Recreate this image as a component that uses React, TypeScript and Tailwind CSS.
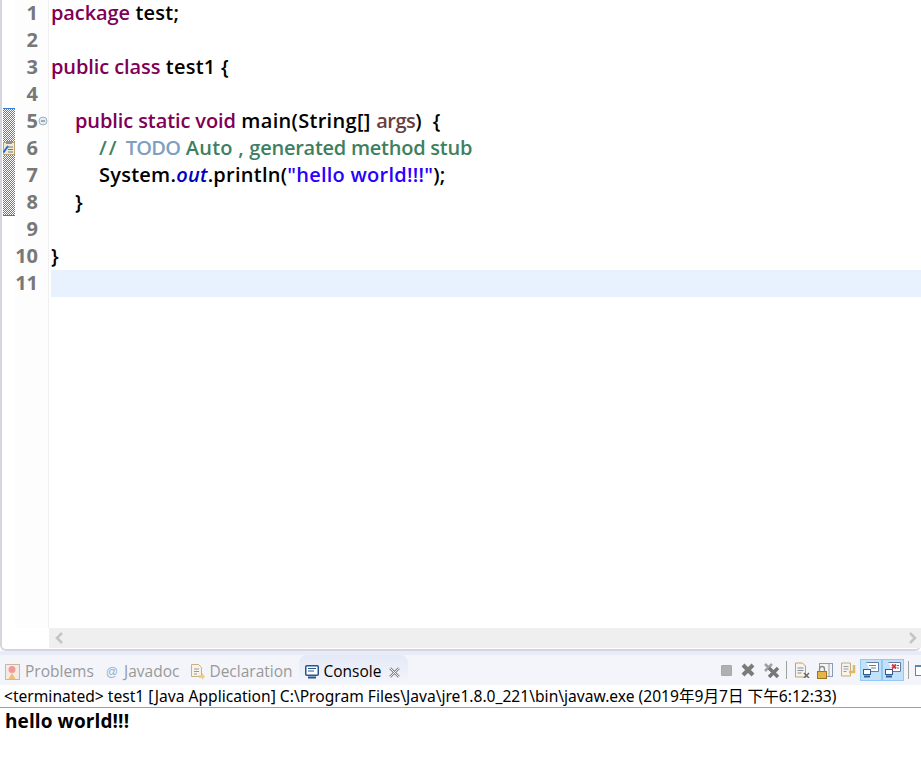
const LINES = [
  [{ t: 'package', k: 1 }, { t: ' test;' }],
  [],
  [{ t: 'public class', k: 1 }, { t: ' test1 {' }],
  [],
  [{ t: '', k: 7 }, { t: 'public static void', k: 1 }, { t: ' main(String[] ', k: 11 }, { t: 'args', k: 2 }, { t: ') {', k: 12 }],
  [{ t: '', k: 8 }, { t: '// ', k: 9 }, { t: 'TODO', k: 4 }, { t: ' Auto ', k: 3 }, { t: ', ', k: 3 }, { t: 'generated method stub', k: 10 }],
  [{ t: '', k: 8 }, { t: 'System.' }, { t: 'out', k: 5 }, { t: '.println(' }, { t: '"hello world!!!"', k: 6 }, { t: ');' }],
  [{ t: '', k: 7 }, { t: '}' }],
  [],
  [{ t: '}' }],
  [],
]

const TOKEN: Record<number, string> = {
  1: 'text-[#7f0055] tracking-[-0.1px]',
  2: 'text-[#6a3e3e] tracking-[-0.5px]',
  3: 'text-[#3f7f5f]',
  4: 'text-[#7f9fbf] tracking-[-0.75px]',
  5: 'text-[#0000c0] italic',
  6: 'text-[#2a00ff]',
  7: 'inline-block w-[24px]',
  8: 'inline-block w-[48px]',
  9: 'text-[#3f7f5f] tracking-[2px]',
  10: 'text-[#3f7f5f] tracking-[-0.25px]',
  11: 'tracking-[0.3px]',
  12: 'tracking-[3px]',
}

function ToolBtn({ children, on, narrow }: { children: React.ReactNode; on?: boolean; narrow?: boolean }) {
  return (
    <span className={`flex h-[22px] items-center justify-center ${on ? 'w-[22px] border border-[#90c8f6] bg-[#c4e1fa]' : narrow ? 'w-[22px]' : 'w-[23px]'}`}>
      {children}
    </span>
  )
}

function Sep() {
  return <span className="mx-[3.5px] h-[18px] w-px bg-[#a0a0a0]" />
}

export default function App() {
  return (
    <div className="flex h-[778px] w-[921px] flex-col overflow-hidden bg-white font-['Open_Sans',sans-serif]">
      {/* editor */}
      <div className="flex h-[651px] flex-col rounded-b-md border-b-2 border-l-2 border-[#d3d6dc]">
        <div className="flex h-[628px]">
          <div className="w-[13px] pl-[1px] pt-[108px]">
            <div className="relative h-[108px] w-[12px] border-y border-[#2f7fd9] bg-[repeating-conic-gradient(#3a86dc_0_25%,#ffffff_0_50%)] bg-[length:2px_2px]">
              <svg className="absolute left-0 top-[32px]" width="12" height="14" viewBox="0 0 12 14">
                <rect x="0.5" y="1.5" width="11" height="12" fill="#f3ead2" stroke="#b9a272" />
                <rect x="3" y="0" width="6" height="3" fill="#8a8f99" />
                <path d="M5 6h5M5 8.500h5M5 11h5" stroke="#6b7a90" />
                <path d="M0.500 11.500 5 5" stroke="#1f6fe0" strokeWidth="2" />
              </svg>
            </div>
          </div>
          <div className="w-[34px] border-r border-[#f0f0f0] bg-[#fdfdfd] text-right text-[20px] font-bold leading-[25px] text-[#787878]">
            {LINES.map((_, i) => (
              <div key={i} className="relative h-[27px] pr-[10px]">
                {i + 1}
                {i === 4 && (
                  <svg className="absolute right-0 top-[8px]" width="10" height="10" viewBox="0 0 10 10">
                    <circle cx="5" cy="5" r="4" fill="#e6edf3" stroke="#9fb0bf" />
                    <path d="M3 5h4" stroke="#56697c" />
                  </svg>
                )}
              </div>
            ))}
          </div>
          <div className="flex-1 whitespace-pre text-[20px] font-semibold leading-[25px] tracking-[0.25px] text-black">
            {LINES.map((line, i) => (
              <div key={i} className={`ml-[2px] h-[27px] ${i === 10 ? 'bg-[#e8f2fe]' : ''}`}>
                {line.map((s, j) => (
                  <span key={j} className={s.k ? TOKEN[s.k] : ''}>
                    {s.t}
                  </span>
                ))}
              </div>
            ))}
          </div>
        </div>
        <div className="ml-[47px] flex h-[20px] items-center justify-between bg-[#efefef] pl-[5px] pr-[3px]">
          <svg width="10" height="12" viewBox="0 0 10 12" fill="none" stroke="#c4c4c4" strokeWidth="2.500">
            <path d="M8 1 3 6l5 5" />
          </svg>
          <svg width="10" height="12" viewBox="0 0 10 12" fill="none" stroke="#c4c4c4" strokeWidth="2.500">
            <path d="M2 1l5 5-5 5" />
          </svg>
        </div>
      </div>

      {/* console view */}
      <div className="h-[4px] bg-[#e7ecf8]" />
      <div className="flex h-[30px] items-stretch bg-[#f3f5fb] pl-[5px] text-[15.500px] text-[#999999]">
        <div className="flex items-center gap-[5px] pr-[12px] pt-[4px]">
          <svg width="15" height="16" viewBox="0 0 15 16">
            <rect x="0.500" y="0.500" width="14" height="15" fill="#f4ece4" stroke="#c9b8a8" />
            <circle cx="7" cy="5.500" r="3.500" fill="#ee9a9a" />
            <path d="M7 9l3.500 6h-7z" fill="#eec070" />
          </svg>
          Problems
        </div>
        <div className="flex items-center gap-[6px] pr-[11px] pt-[4px] font-['Liberation_Sans',sans-serif]">
          <span className="text-[12px] text-[#8fb0d0]">@</span>
          <span className="font-['Open_Sans',sans-serif]">Javadoc</span>
        </div>
        <div className="flex items-center gap-[4px] pr-[6px] pt-[4px]">
          <svg width="15" height="18" viewBox="0 0 15 18" fill="none">
            <path d="M1.500 1.500h7l3 3v9h-10z" fill="#f8f3e6" stroke="#c8b080" />
            <path d="M4 6h5M4 8.500h5M4 11h3" stroke="#8a9bb0" />
            <path d="M9 12h3v-2l3 3.500-3 3.500v-2H9z" fill="#eccf90" />
          </svg>
          Declaration
        </div>
        <div className="flex w-[109px] items-center rounded-t-lg bg-gradient-to-b from-[#e3e9f6] to-[#f4f6fb] pl-[6px] pt-[4px] text-black">
          <svg width="14" height="14" viewBox="0 0 14 14" className="mr-[5px]">
            <rect x="0.750" y="0.750" width="12.500" height="9.500" rx="1" fill="#ffffff" stroke="#27558f" strokeWidth="1.500" />
            <path d="M3 3.500h8M3 6h6" stroke="#27558f" />
            <path d="M3 12.500h8" stroke="#27558f" strokeWidth="2" />
          </svg>
          Console
          <svg width="11" height="11" viewBox="0 0 10 10" className="ml-[8px]" fill="none">
            <path d="M1 1l8 8M9 1 1 9" stroke="#8a8a8a" strokeWidth="2.500" />
            <path d="M1 1l8 8M9 1 1 9" stroke="#ffffff" strokeWidth="0.800" />
          </svg>
        </div>
        <div className="ml-auto flex items-center">
          <ToolBtn narrow>
            <span className="h-[11px] w-[11px] rounded-[1px] border border-[#a8a8a8] bg-[#b0b0b0]" />
          </ToolBtn>
          <ToolBtn narrow>
            <svg width="14" height="14" viewBox="0 0 14 14">
              <path d="M2 2l10 10M12 2 2 12" stroke="#7b7b7b" strokeWidth="4" />
            </svg>
          </ToolBtn>
          <ToolBtn>
            <svg width="16" height="16" viewBox="0 0 16 16" fill="none">
              <path d="M2 2l7 7M9 2 2 9" stroke="#a0a0a0" strokeWidth="2.500" />
              <path d="M6 6l9 9M15 6l-9 9" stroke="#777777" strokeWidth="3.500" />
            </svg>
          </ToolBtn>
          <Sep />
          <ToolBtn>
            <svg width="16" height="16" viewBox="0 0 16 16" fill="none">
              <path d="M1.500 1h7l3 3v11h-10z" fill="#f8f3e6" stroke="#b8a478" />
              <path d="M3.500 6h6M3.500 8.500h6M3.500 11h4" stroke="#7f8fa5" />
              <path d="M10 11l5 5M15 11l-5 5" stroke="#666666" strokeWidth="1.500" />
            </svg>
          </ToolBtn>
          <ToolBtn>
            <svg width="16" height="17" viewBox="0 0 16 17" fill="none">
              <rect x="2.500" y="1.500" width="13" height="13" fill="#f4f4f0" stroke="#8d9cb0" />
              <path d="M12 2v12" stroke="#8d9cb0" />
              <rect x="0.500" y="9.500" width="9" height="7" fill="#e5b54a" stroke="#9c7420" />
              <path d="M2.500 9.500V7a2.500 2.500 0 0 1 5 0v2.500" stroke="#8a8a8a" strokeWidth="1.300" />
            </svg>
          </ToolBtn>
          <ToolBtn>
            <svg width="16" height="16" viewBox="0 0 16 16" fill="none">
              <path d="M1.500 1h9v13h-9z" fill="#f8f3e6" stroke="#c2ad7e" />
              <path d="M3.500 4.500h5M3.500 7h5M3.500 9.500h3" stroke="#8f9eb2" />
              <path d="M14 3v7H9" stroke="#e0b860" strokeWidth="2.500" />
            </svg>
          </ToolBtn>
          <span className="w-px" />
          <ToolBtn on>
            <svg width="16" height="16" viewBox="0 0 16 16" fill="none">
              <path d="M3.500 0.500h12v9h-8" fill="#ffffff" stroke="#5f7fa5" />
              <path d="M6 3.500h7M8 6h5" stroke="#5f7fa5" />
              <rect x="0.500" y="7.500" width="7" height="5" fill="#ffffff" stroke="#2f5d90" />
              <path d="M1 14.500h6" stroke="#2f5d90" strokeWidth="2" />
            </svg>
          </ToolBtn>
          <ToolBtn on>
            <svg width="16" height="16" viewBox="0 0 16 16" fill="none">
              <path d="M3.500 0.500h12v9h-8" fill="#ffffff" stroke="#5f7fa5" />
              <path d="M7 2.500l4 4M11 2.500l-4 4" stroke="#d9333f" strokeWidth="2" />
              <path d="M12 3.500h2M12 6h2" stroke="#d9333f" />
              <rect x="0.500" y="7.500" width="7" height="5" fill="#ffffff" stroke="#2f5d90" />
              <path d="M1 14.500h6" stroke="#2f5d90" strokeWidth="2" />
            </svg>
          </ToolBtn>
          <Sep />
          <svg width="6" height="12" viewBox="0 0 6 12" fill="none" className="ml-[3px]">
            <rect x="0.500" y="1.500" width="12" height="10" fill="#ffffff" stroke="#5f86ad" />
            <path d="M0 2h6" stroke="#5f86ad" strokeWidth="2" />
          </svg>
        </div>
      </div>
      <div className="flex h-[23px] items-center whitespace-pre border-b border-[#a0a0a0] pl-[4px] pt-[2px] font-['Noto_Sans','Noto_Sans_CJK_SC',sans-serif] text-[15.600px] text-black">
        {'<terminated> test1 [Java Application] C:\\Program Files\\Java\\jre1.8.0_221\\bin\\javaw.exe (2019年9月7日 下午6:12:33)'}
      </div>
      <div className="pl-[5px] text-[19px] font-bold leading-[27px] tracking-[0.1px] text-black">hello world!!!</div>
    </div>
  )
}
